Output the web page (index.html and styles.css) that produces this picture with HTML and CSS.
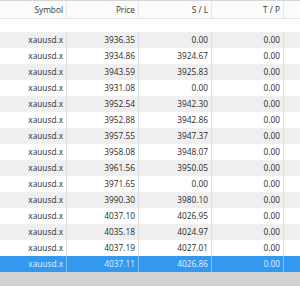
FILE: index.html
```html
<!DOCTYPE html>
<html>
<head>
<meta charset="utf-8">
<link rel="stylesheet" href="styles.css">
</head>
<body>
<div class="table">
  <div class="row head">
    <div class="cell">Symbol</div><div class="cell">Price</div><div class="cell">S / L</div><div class="cell">T / P</div><div class="cell last"></div>
  </div>
  <div class="spacer"></div>
  <div class="row alt"><div class="cell">xauusd.x</div><div class="cell">3936.35</div><div class="cell">0.00</div><div class="cell">0.00</div><div class="cell last"></div></div>
  <div class="row"><div class="cell">xauusd.x</div><div class="cell">3934.86</div><div class="cell">3924.67</div><div class="cell">0.00</div><div class="cell last"></div></div>
  <div class="row alt"><div class="cell">xauusd.x</div><div class="cell">3943.59</div><div class="cell">3925.83</div><div class="cell">0.00</div><div class="cell last"></div></div>
  <div class="row"><div class="cell">xauusd.x</div><div class="cell">3931.08</div><div class="cell">0.00</div><div class="cell">0.00</div><div class="cell last"></div></div>
  <div class="row alt"><div class="cell">xauusd.x</div><div class="cell">3952.54</div><div class="cell">3942.30</div><div class="cell">0.00</div><div class="cell last"></div></div>
  <div class="row"><div class="cell">xauusd.x</div><div class="cell">3952.88</div><div class="cell">3942.86</div><div class="cell">0.00</div><div class="cell last"></div></div>
  <div class="row alt"><div class="cell">xauusd.x</div><div class="cell">3957.55</div><div class="cell">3947.37</div><div class="cell">0.00</div><div class="cell last"></div></div>
  <div class="row"><div class="cell">xauusd.x</div><div class="cell">3958.08</div><div class="cell">3948.07</div><div class="cell">0.00</div><div class="cell last"></div></div>
  <div class="row alt"><div class="cell">xauusd.x</div><div class="cell">3961.56</div><div class="cell">3950.05</div><div class="cell">0.00</div><div class="cell last"></div></div>
  <div class="row"><div class="cell">xauusd.x</div><div class="cell">3971.65</div><div class="cell">0.00</div><div class="cell">0.00</div><div class="cell last"></div></div>
  <div class="row alt"><div class="cell">xauusd.x</div><div class="cell">3990.30</div><div class="cell">3980.10</div><div class="cell">0.00</div><div class="cell last"></div></div>
  <div class="row"><div class="cell">xauusd.x</div><div class="cell">4037.10</div><div class="cell">4026.95</div><div class="cell">0.00</div><div class="cell last"></div></div>
  <div class="row alt"><div class="cell">xauusd.x</div><div class="cell">4035.18</div><div class="cell">4024.97</div><div class="cell">0.00</div><div class="cell last"></div></div>
  <div class="row"><div class="cell">xauusd.x</div><div class="cell">4037.19</div><div class="cell">4027.01</div><div class="cell">0.00</div><div class="cell last"></div></div>
  <div class="row sel"><div class="cell">xauusd.x</div><div class="cell">4037.11</div><div class="cell">4026.86</div><div class="cell">0.00</div><div class="cell last"></div></div>
  <div class="band"></div>
</div>
</body>
</html>
```

FILE: styles.css
```css
html, body {
  margin: 0;
  padding: 0;
  background: #ffffff;
}
.table {
  width: 300px;
  font-family: "Open Sans", "Noto Sans", sans-serif;
  font-size: 8.3px;
  color: #2a2a2a;
}
.row {
  display: grid;
  grid-template-columns: 67px 72px 73px 72px 1fr;
  height: 16px;
  background: #ffffff;
}
.row.alt {
  background: #efefef;
}
.cell {
  border-right: 1px solid #dedede;
  text-align: right;
  padding-right: 3px;
  line-height: 16px;
  white-space: nowrap;
  overflow: hidden;
}
.cell.last {
  border-right: none;
}
.head {
  height: 17px;
  border-top: 1px solid #d6d6d6;
  border-bottom: 1px solid #e4e4e4;
  background: #fbfbfb;
  color: #333333;
}
.head .cell {
  line-height: 17px;
  border-right-color: #e6e6e6;
}
.spacer {
  height: 13px;
}
.row.sel {
  background: #3399ee;
  color: #e4f0fc;
}
.row.sel .cell {
  border-right-color: #7bbcf3;
}
.band {
  height: 14px;
  background: #d2d2d2;
}
```
